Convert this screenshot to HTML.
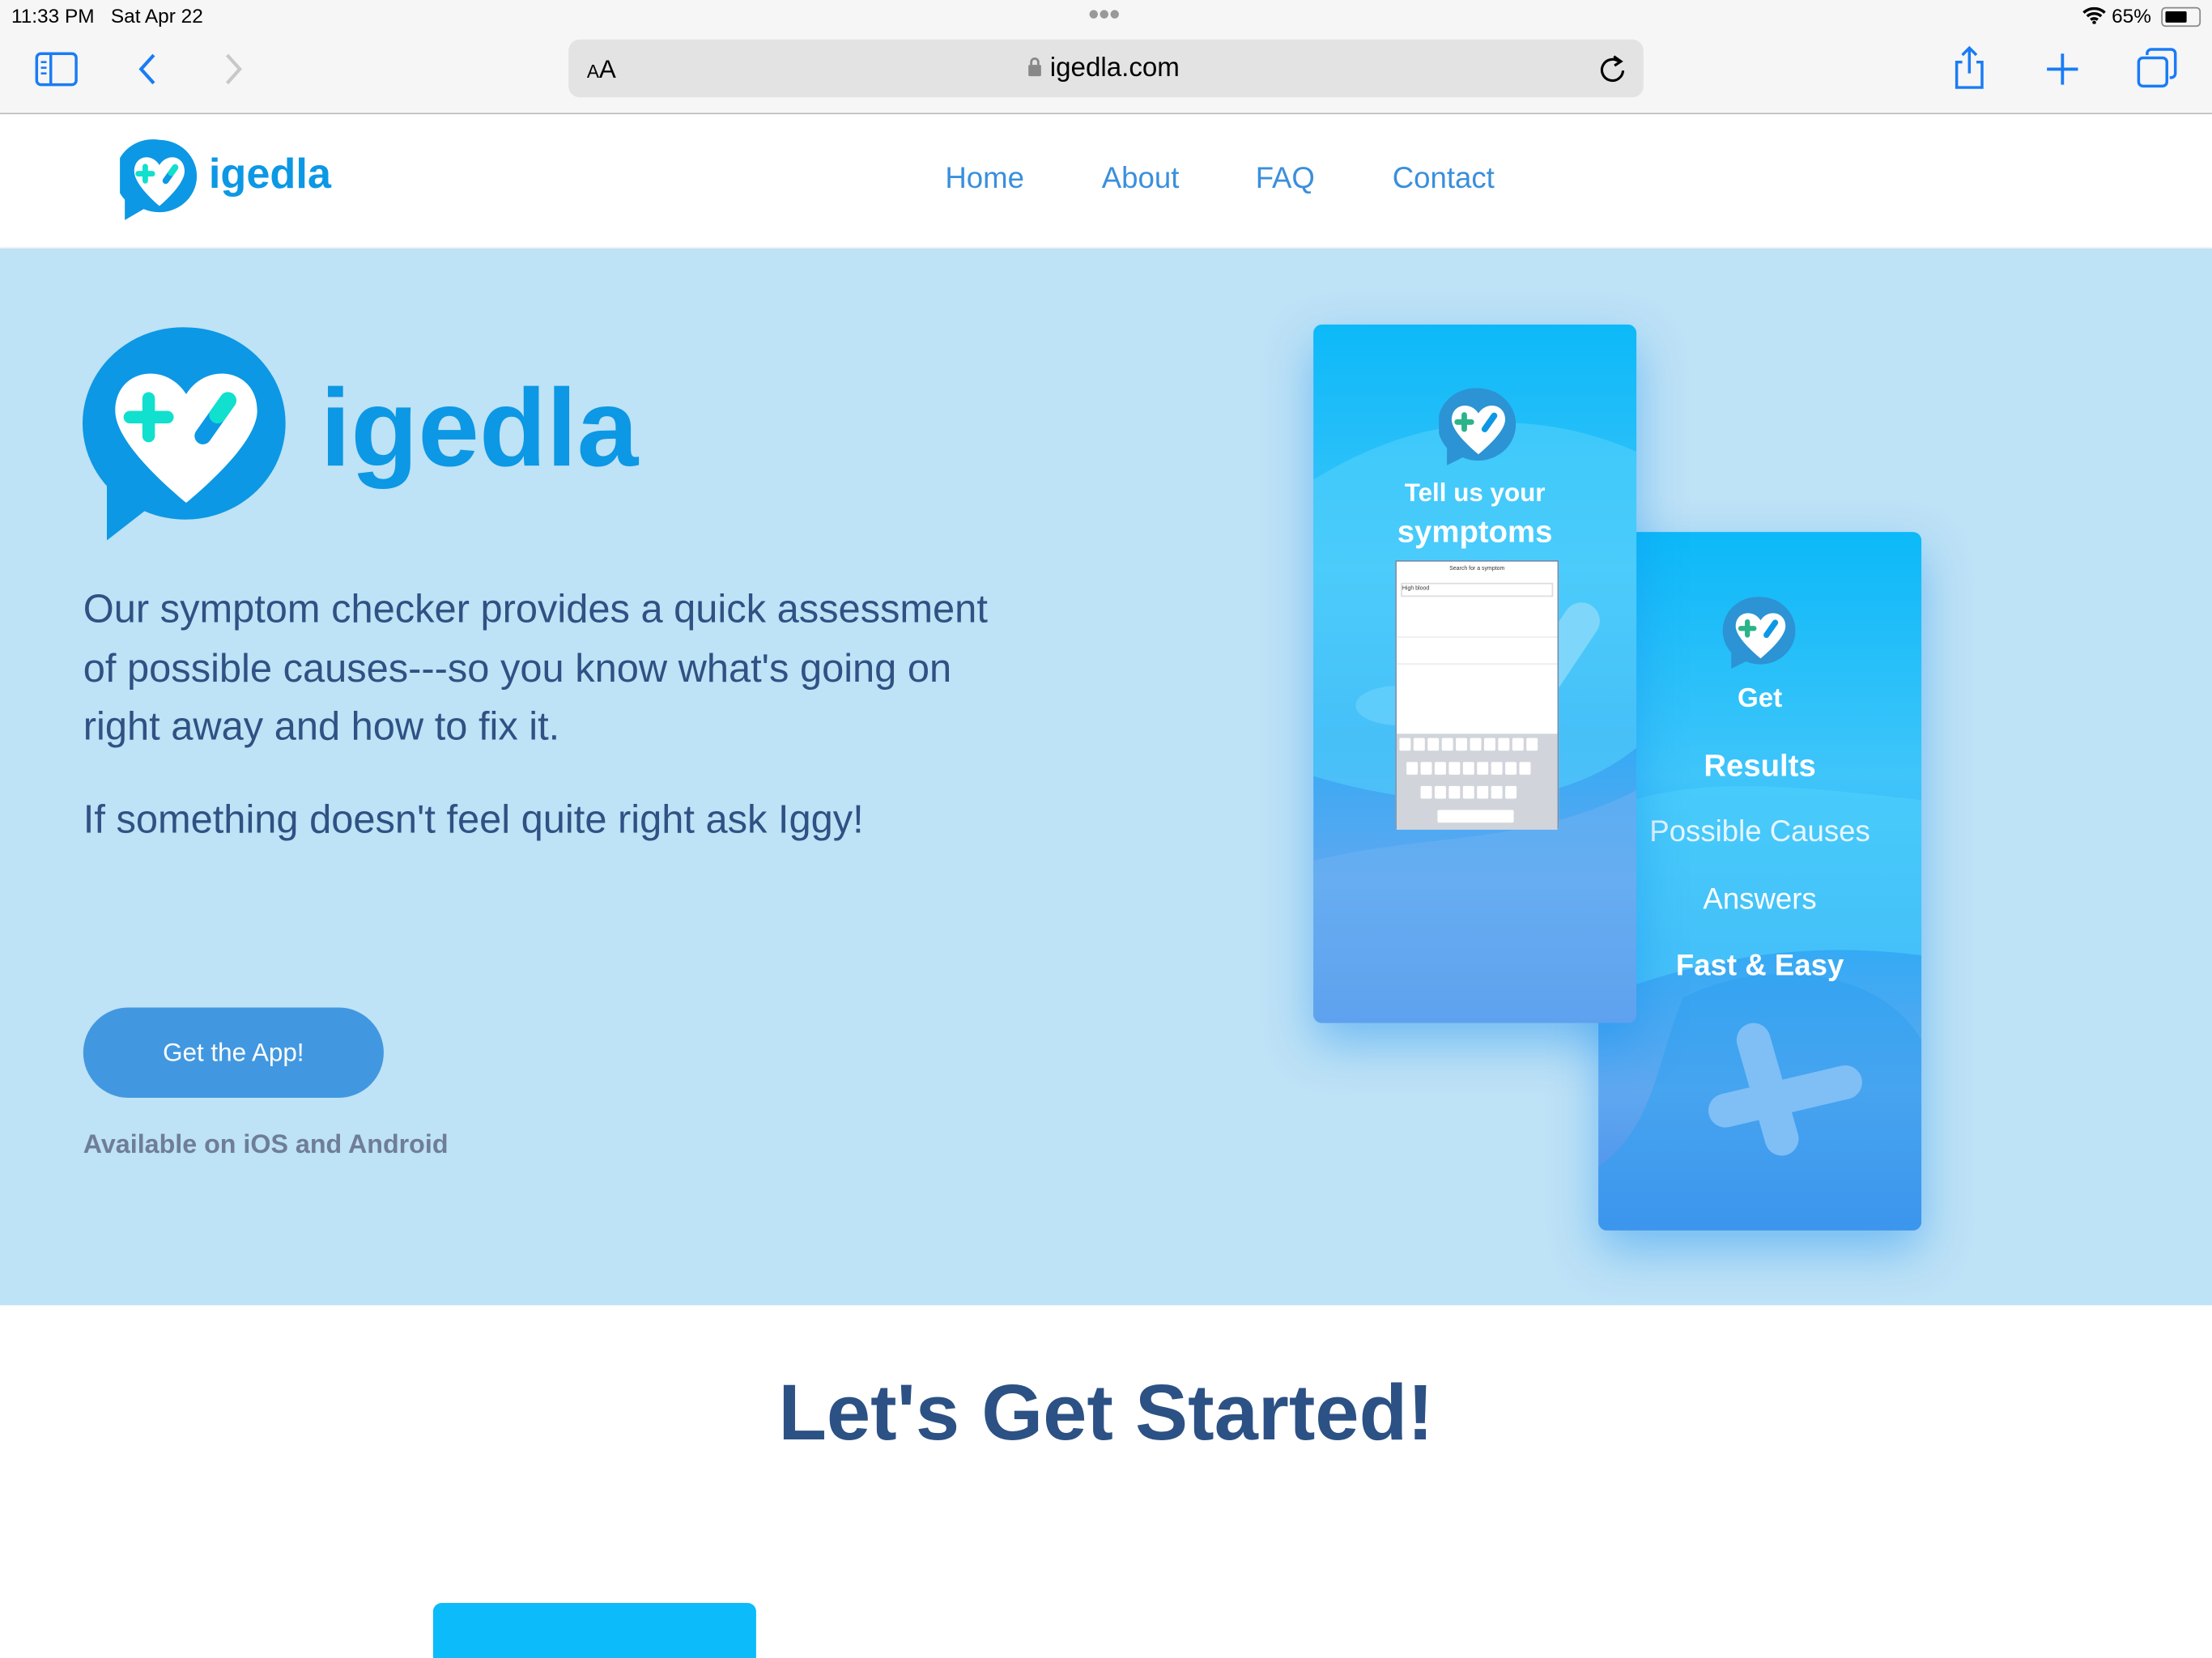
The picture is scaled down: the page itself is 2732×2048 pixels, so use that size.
<!DOCTYPE html>
<html><head><meta charset="utf-8">
<style>
html,body{margin:0;padding:0;width:2732px;height:2048px;overflow:hidden;background:#fff;font-family:"Liberation Sans",sans-serif}
#w{position:absolute;left:0;top:0;width:1568px;height:1175px;transform:scale(1.74235,1.74298);transform-origin:0 0;overflow:hidden}
.a{position:absolute}
.card{position:absolute;width:229px;border-radius:6px;overflow:hidden;box-shadow:0 14px 34px rgba(20,140,240,.45);background:linear-gradient(180deg,#0cb9f8 0%,#3fc5fa 35%,#35aaf4 60%,#5fa8f0 80%,#4a8bea 100%)}
.ct{position:absolute;left:0;width:100%;text-align:center;color:#fff;font-weight:bold}
.k{display:inline-block;width:8px;height:9px;background:#fff;margin:1px 1px;border-radius:1px}
</style></head><body><div id="w">
<div class="a" style="left:0;top:0;width:1568px;height:80px;background:#f6f6f6;border-bottom:1px solid #bbb"></div>
<div class="a" style="left:8px;top:3px;font-size:14px;color:#000">11:33 PM&nbsp;&nbsp; Sat Apr 22</div>
<div class="a" style="left:771px;top:1px;font-size:14px;color:#999;letter-spacing:-1px">●●●</div>
<div class="a" style="left:1476px;top:3px;font-size:14px;color:#000">
<svg width="17" height="12" viewBox="0 0 17 12" style="vertical-align:-1px"><path d="M1 4a11 11 0 0 1 15 0M3.5 6.5a7.5 7.5 0 0 1 10 0M6 9a4 4 0 0 1 5 0" stroke="#000" stroke-width="2" fill="none"/><circle cx="8.5" cy="11" r="1.3"/></svg> 65%</div>
<div class="a" style="left:1532px;top:5px;width:26px;height:12px;border:1px solid #888;border-radius:3px"><div style="margin:2px;width:15px;height:8px;background:#000;border-radius:1px"></div></div>
<svg class="a" style="left:24px;top:36px" width="32" height="26" viewBox="0 0 32 26"><rect x="2" y="2" width="28" height="22" rx="3" fill="none" stroke="#1a7cf5" stroke-width="2"/><line x1="12" y1="2" x2="12" y2="24" stroke="#1a7cf5" stroke-width="2"/><path d="M5 8h4M5 12h4M5 16h4" stroke="#1a7cf5" stroke-width="1.5"/></svg>
<svg class="a" style="left:95px;top:36px" width="20" height="26"><path d="M14 3L5 13l9 10" stroke="#1a7cf5" stroke-width="2.4" fill="none"/></svg>
<svg class="a" style="left:155px;top:36px" width="20" height="26"><path d="M6 3l9 10-9 10" stroke="#c8c8c8" stroke-width="2.4" fill="none"/></svg>
<div class="a" style="left:403px;top:28px;width:762px;height:41px;background:#e3e3e3;border-radius:8px"></div>
<div class="a" style="left:416px;top:39px;font-size:18px;color:#000"><span style="font-size:13px">A</span>A</div>
<div class="a" style="left:728px;top:38px;font-size:19px;color:#000"><svg width="11" height="15" viewBox="0 0 11 15" style="vertical-align:-1px"><rect x="1" y="6" width="9" height="8" rx="1" fill="#888"/><path d="M3 6V4a2.5 2.5 0 0 1 5 0v2" stroke="#888" stroke-width="1.6" fill="none"/></svg> igedla.com</div>
<svg class="a" style="left:1132px;top:37px" width="22" height="24" viewBox="0 0 22 24"><path d="M16 7A7.5 7.5 0 1 0 18.5 13" stroke="#000" stroke-width="1.8" fill="none"/><path d="M12 3l5 3.5-4.5 3" stroke="#000" stroke-width="1.8" fill="none"/></svg>
<svg class="a" style="left:1383px;top:32px" width="26" height="32" viewBox="0 0 26 32"><path d="M8 12H4v18h18V12h-4M13 2v18M8 7l5-5 5 5" stroke="#1a7cf5" stroke-width="2" fill="none"/></svg>
<svg class="a" style="left:1449px;top:36px" width="26" height="26"><path d="M13 2v22M2 13h22" stroke="#1a7cf5" stroke-width="2.2"/></svg>
<svg class="a" style="left:1514px;top:33px" width="30" height="30" viewBox="0 0 30 30"><rect x="2" y="8" width="20" height="20" rx="3" fill="none" stroke="#1a7cf5" stroke-width="2"/><path d="M8 6V5a3 3 0 0 1 3-3h14a3 3 0 0 1 3 3v14a3 3 0 0 1-3 3h-1" stroke="#1a7cf5" stroke-width="2" fill="none"/></svg>

<div class="a" style="left:0;top:81px;width:1568px;height:94px;background:#fff;box-shadow:0 1px 2px rgba(0,0,0,.08)"></div>
<svg class="a" style="left:85px;top:98px" width="56" height="58" viewBox="0 0 100 104"><path d="M50 2A48 46 0 1 1 30 90L6 104V78A48 46 0 0 1 50 2z" fill="#0c98e4"/><path d="M50 34C40 18 18 22 18 42c0 14 20 34 32 44 12-10 32-30 32-44 0-20-22-24-32-8z" fill="#fff"/><path d="M32 36v18M23 45h18" stroke="#10e0cd" stroke-width="7" stroke-linecap="round"/><path d="M70 37L58 54" stroke="#0c98e4" stroke-width="8" stroke-linecap="round"/><path d="M70 37l-5 7" stroke="#10e0cd" stroke-width="8" stroke-linecap="round"/></svg>
<div class="a" style="left:148px;top:107px;font-size:30px;font-weight:bold;color:#0c98e4">igedla</div>
<div class="a" style="left:670px;top:115px;font-size:21px;color:#3a8fdc">Home</div>
<div class="a" style="left:781px;top:115px;font-size:21px;color:#3a8fdc">About</div>
<div class="a" style="left:890px;top:115px;font-size:21px;color:#3a8fdc">FAQ</div>
<div class="a" style="left:987px;top:115px;font-size:21px;color:#3a8fdc">Contact</div>

<div class="a" style="left:0;top:176px;width:1568px;height:749px;background:#bee2f6"></div>
<svg class="a" style="left:58px;top:228px" width="148" height="156" viewBox="0 0 100 104"><path d="M50 2A48 46 0 1 1 30 90L12 104V78A48 46 0 0 1 50 2z" fill="#0c98e4"/><path d="M50 34C40 18 16 22 16 42c0 14 22 34 34 44 12-10 34-30 34-44 0-20-24-24-34-8z" fill="#fff"/><path d="M32 36v18M23 45h18" stroke="#10e0cd" stroke-width="6" stroke-linecap="round"/><path d="M70 37L58 54" stroke="#0c98e4" stroke-width="8" stroke-linecap="round"/><path d="M70 37l-5 7" stroke="#10e0cd" stroke-width="8" stroke-linecap="round"/></svg>
<div class="a" style="left:227px;top:258px;font-size:78px;font-weight:bold;color:#0c98e4">igedla</div>
<div class="a" style="left:59px;top:411px;width:660px;font-size:28px;line-height:41.5px;color:#2f5183">Our symptom checker provides a quick assessment of possible causes---so you know what's going on right away and how to fix it.</div>
<div class="a" style="left:59px;top:565px;font-size:28px;color:#2f5183">If something doesn't feel quite right ask Iggy!</div>
<div class="a" style="left:59px;top:714px;width:213px;height:64px;border-radius:32px;background:#4298e0;color:#fff;font-size:18px;text-align:center;line-height:64px">Get the App!</div>
<div class="a" style="left:59px;top:800px;font-size:18.5px;font-weight:bold;color:#6f7e98">Available on iOS and Android</div>

<div class="card" style="left:1133px;top:377px;height:495px">
<svg class="a" style="left:0;top:0" width="229" height="495"><path d="M0 200C60 170 140 180 229 190V300C150 290 80 300 0 330z" fill="#4fd0fb" opacity=".6"/><path d="M60 330C120 300 200 310 229 360V495H0V450C40 420 40 380 60 330z" fill="#2d9ff0" opacity=".5"/><path d="M110 360l20 70M90 410l85-20" stroke="#7fbff5" stroke-width="24" stroke-linecap="round"/></svg>
<svg class="a" style="left:88px;top:45px" width="54" height="54" viewBox="0 0 100 104"><path d="M50 2A48 46 0 1 1 30 90L10 100V78A48 46 0 0 1 50 2z" fill="#2c93d4"/><path d="M50 34C40 18 16 22 16 42c0 14 22 34 34 44 12-10 34-30 34-44 0-20-24-24-34-8z" fill="#fff"/><path d="M32 36v18M23 45h18" stroke="#2bb38a" stroke-width="7" stroke-linecap="round"/><path d="M70 37L58 54" stroke="#0c98e4" stroke-width="8" stroke-linecap="round"/></svg>
<div class="ct" style="top:108px;font-size:19px">Get</div>
<div class="ct" style="top:153px;font-size:22px">Results</div>
<div class="ct" style="top:201px;font-size:21px;font-weight:normal;color:#e8f6ff">Possible Causes</div>
<div class="ct" style="top:249px;font-size:21px;font-weight:normal">Answers</div>
<div class="ct" style="top:296px;font-size:21px">Fast &amp; Easy</div>
</div>
<div class="card" style="left:931px;top:230px;height:495px">
<svg class="a" style="left:0;top:0" width="229" height="495"><path d="M0 110C80 60 160 60 229 90V300C180 340 100 350 0 320z" fill="#55d2fc" opacity=".55"/><path d="M0 380C80 360 150 370 229 330V495H0z" fill="#6cb0f2" opacity=".6"/><path d="M190 210l-40 60" stroke="#7fd6fb" stroke-width="26" stroke-linecap="round"/><ellipse cx="60" cy="270" rx="30" ry="14" fill="#6fd4fb" opacity=".6"/></svg>
<svg class="a" style="left:89px;top:44px" width="56" height="58" viewBox="0 0 100 104"><path d="M50 2A48 46 0 1 1 30 90L10 100V78A48 46 0 0 1 50 2z" fill="#2c93d4"/><path d="M50 34C40 18 16 22 16 42c0 14 22 34 34 44 12-10 34-30 34-44 0-20-24-24-34-8z" fill="#fff"/><path d="M32 36v18M23 45h18" stroke="#2bb38a" stroke-width="7" stroke-linecap="round"/><path d="M70 37L58 54" stroke="#0c98e4" stroke-width="8" stroke-linecap="round"/></svg>
<div class="ct" style="top:109px;font-size:18px">Tell us your</div>
<div class="ct" style="top:134px;font-size:22px">symptoms</div>
<div class="a" style="left:58px;top:167px;width:114px;height:188px;background:#fff;border:1px solid #6e8fb0">
<div style="font-size:4px;color:#333;text-align:center;padding-top:2px">Search for a symptom</div>
<div style="margin:8px 3px 0;height:8px;border:1px solid #ddd;font-size:4px;color:#333">High blood</div>
<div style="height:1px;background:#eee;margin-top:28px"></div>
<div style="height:1px;background:#eee;margin-top:18px"></div>
<div class="a" style="left:0;top:122px;width:114px;height:66px;background:#d1d5db;line-height:0;padding-top:2px">
<div style="padding-left:1px"><i class="k"></i><i class="k"></i><i class="k"></i><i class="k"></i><i class="k"></i><i class="k"></i><i class="k"></i><i class="k"></i><i class="k"></i><i class="k"></i></div>
<div style="padding-left:6px;margin-top:6px"><i class="k"></i><i class="k"></i><i class="k"></i><i class="k"></i><i class="k"></i><i class="k"></i><i class="k"></i><i class="k"></i><i class="k"></i></div>
<div style="padding-left:16px;margin-top:6px"><i class="k"></i><i class="k"></i><i class="k"></i><i class="k"></i><i class="k"></i><i class="k"></i><i class="k"></i></div>
<div style="padding-left:28px;margin-top:6px"><i class="k" style="width:54px"></i></div>
</div>
</div>
</div>

<div class="a" style="left:0;top:968px;width:1568px;text-align:center;font-size:56px;font-weight:bold;color:#2c5184">Let's Get Started!</div>
<div class="a" style="left:307px;top:1136px;width:229px;height:60px;background:#0bbbfa;border-radius:6px 6px 0 0"></div>
</div></body></html>
